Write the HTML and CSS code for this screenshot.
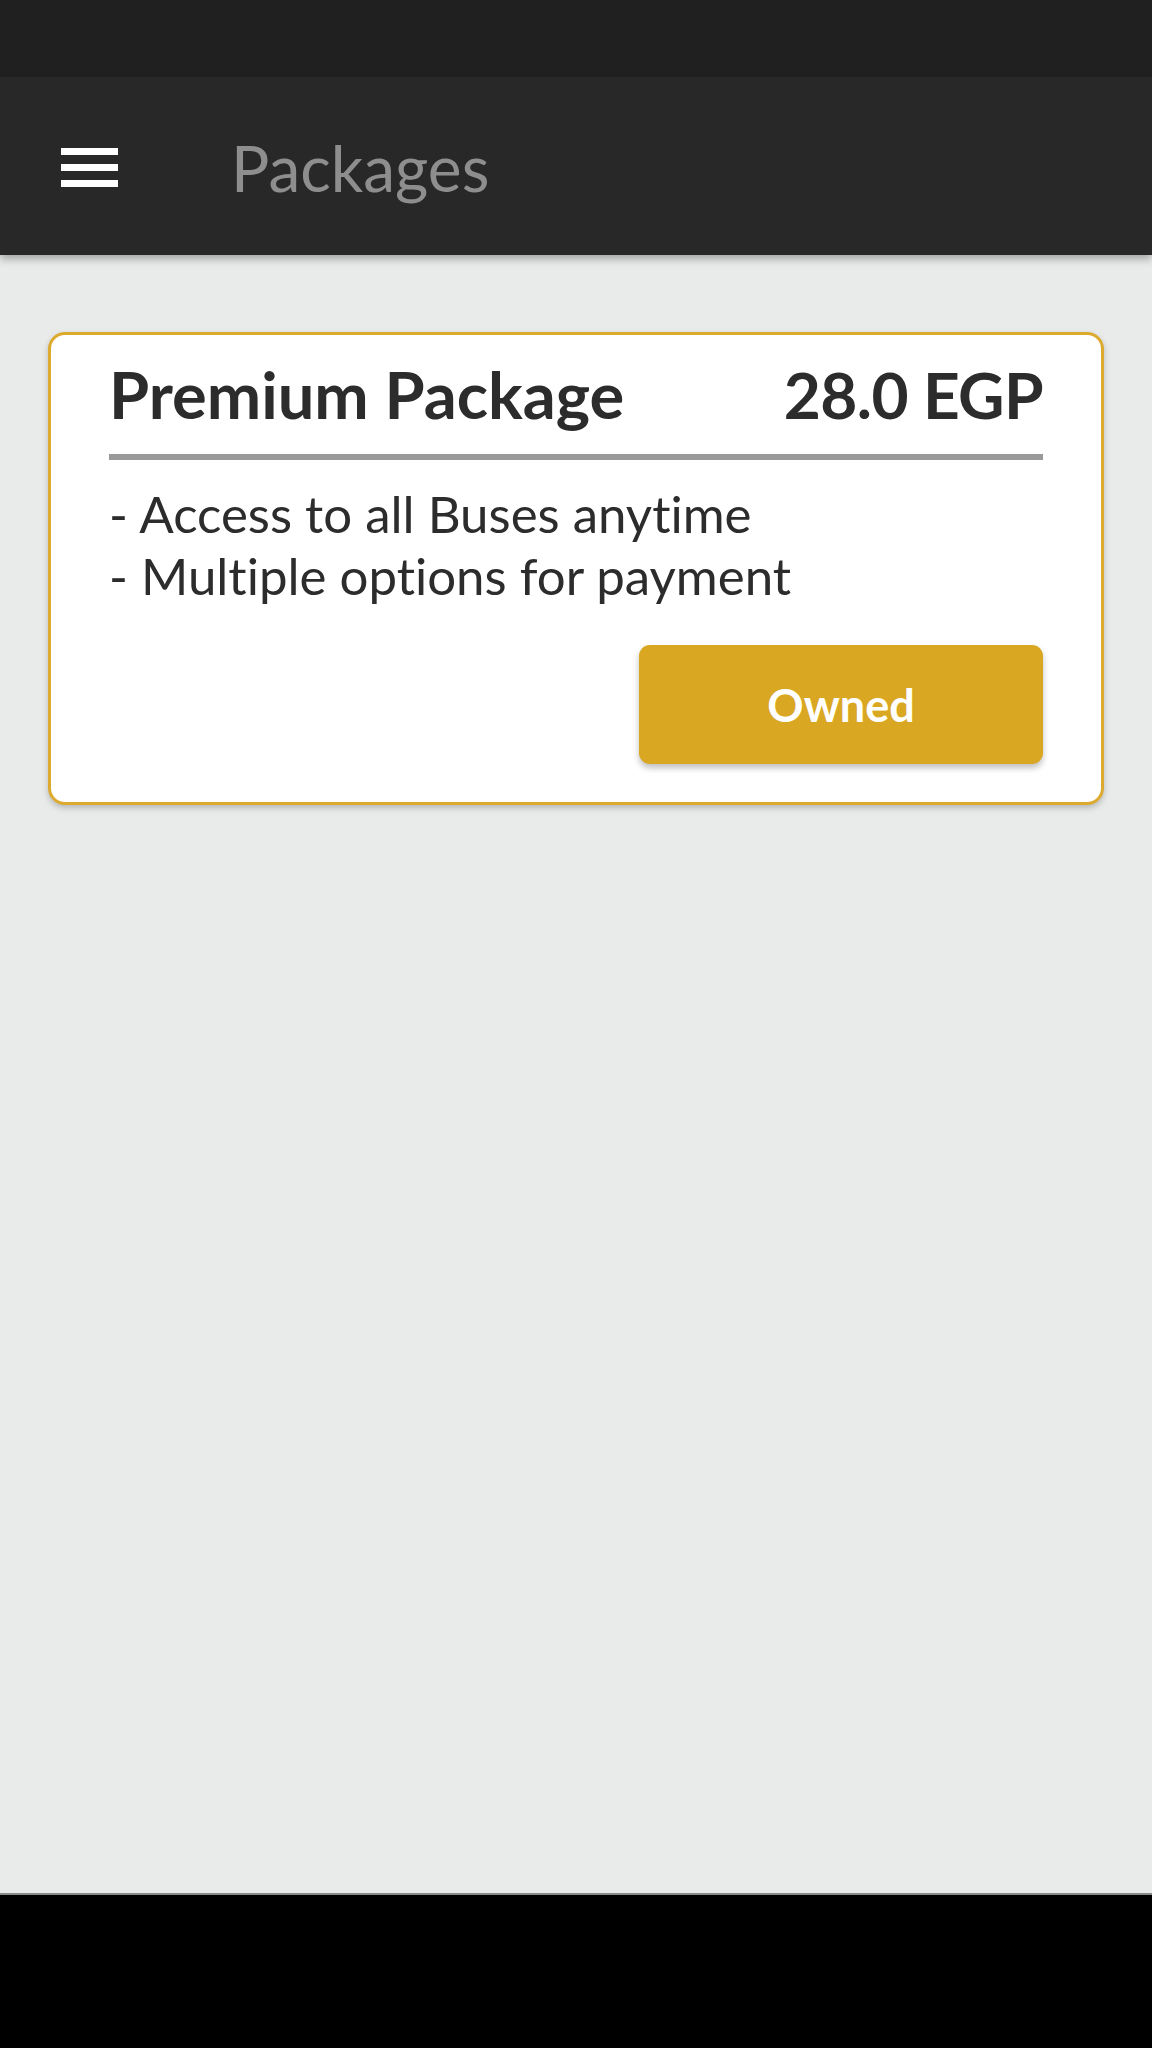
FILE: index.html
```html
<!DOCTYPE html>
<html lang="en">
<head>
<meta charset="utf-8">
<title>Packages</title>
<link rel="stylesheet" href="styles.css">
</head>
<body>
<div class="screen">
  <div class="status-bar"></div>
  <header class="app-bar">
    <button class="menu-btn" aria-label="Menu">
      <svg width="57" height="39" viewBox="0 0 57 39">
        <rect x="0" y="0" width="57" height="7" fill="#ffffff"/>
        <rect x="0" y="16" width="57" height="7" fill="#ffffff"/>
        <rect x="0" y="32" width="57" height="7" fill="#ffffff"/>
      </svg>
    </button>
    <h1 class="app-title">Packages</h1>
  </header>
  <main class="content">
    <section class="card">
      <div class="card-head">
        <span class="pkg-name">Premium Package</span>
        <span class="pkg-price">28.0 EGP</span>
      </div>
      <div class="divider"></div>
      <div class="pkg-features">
        <div>- Access to all Buses anytime</div>
        <div>- Multiple options for payment</div>
      </div>
      <div class="card-actions">
        <button class="owned-btn">Owned</button>
      </div>
    </section>
  </main>
  <div class="nav-bar"></div>
</div>
</body>
</html>
```

FILE: styles.css
```css
* {
  box-sizing: border-box;
}

html, body {
  margin: 0;
  padding: 0;
}

body {
  font-family: "Lato", "Noto Sans", "Liberation Sans", sans-serif;
  font-variant-ligatures: none;
  background: #e9ebea;
}

.screen {
  width: 1152px;
  height: 2048px;
  display: flex;
  flex-direction: column;
  overflow: hidden;
}

.status-bar {
  height: 77px;
  flex: none;
  background: #202020;
}

.app-bar {
  height: 178px;
  flex: none;
  background: #282828;
  display: flex;
  align-items: center;
  padding: 3px 0 0 61px;
  box-shadow: 0 4px 8px rgba(0, 0, 0, 0.3);
  position: relative;
  z-index: 2;
}

.menu-btn {
  background: none;
  border: 0;
  padding: 0;
  margin: 0;
  width: 57px;
  height: 39px;
  display: flex;
}

.app-title {
  margin: 0 0 0 113px;
  font-size: 64px;
  font-weight: 400;
  line-height: 78px;
  color: #8e8e8e;
}

.content {
  flex: 1;
  background: #e9ebea;
  padding: 77px 48px 0 48px;
}

.card {
  background: #ffffff;
  border: 3px solid #dcaa2e;
  border-radius: 17px;
  padding: 20px 58px 38px 58px;
  box-shadow: 0 3px 6px rgba(0, 0, 0, 0.22);
  color: #2c2c2c;
}

.card-head {
  display: flex;
  justify-content: space-between;
  align-items: baseline;
  font-size: 65px;
  font-weight: 700;
  line-height: 78px;
}

.pkg-price {
  font-size: 64px;
  letter-spacing: -0.6px;
}

.divider {
  height: 6px;
  background: #9a9a9a;
  margin-top: 20px;
}

.pkg-features {
  margin-top: 23px;
  font-size: 51px;
  line-height: 62px;
  color: #2c2c2c;
}

.card-actions {
  display: flex;
  justify-content: flex-end;
  margin-top: 38px;
}

.owned-btn {
  width: 404px;
  height: 119px;
  border: 0;
  border-radius: 11px;
  background: #daa723;
  color: #ffffff;
  font-family: "Lato", "Noto Sans", "Liberation Sans", sans-serif;
  font-variant-ligatures: none;
  font-size: 45px;
  font-weight: 700;
  box-shadow: 0 4px 6px rgba(0, 0, 0, 0.25);
  padding: 0;
}

.nav-bar {
  height: 155px;
  flex: none;
  background: #000000;
  border-top: 2px solid #8a8a8a;
}
```
